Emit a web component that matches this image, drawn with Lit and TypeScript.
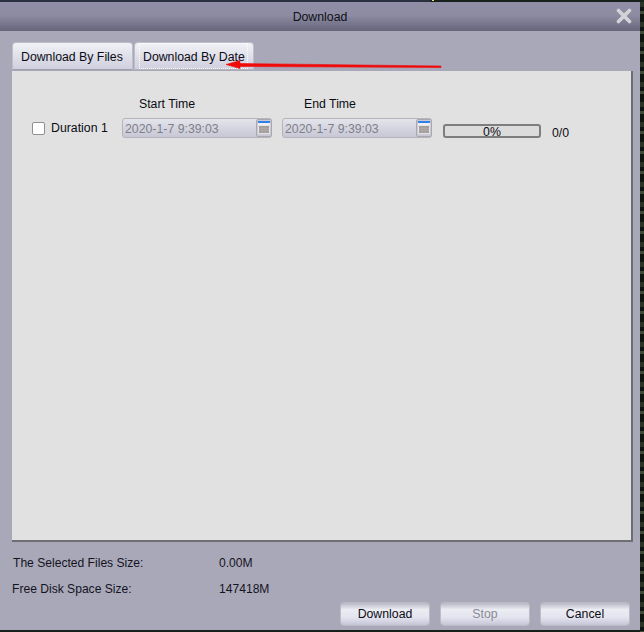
import { LitElement, html, css, svg } from "lit";
import { customElement } from "lit/decorators.js";

const calendar = svg`<svg class="cal-svg" width="16" height="18" viewBox="0 0 16 18">
  <rect x="0.5" y="0.5" width="15" height="17" rx="1.5" fill="#c9c8d3" stroke="#a8a8b0"/>
  <rect x="2" y="2" width="12" height="2" fill="#2f7fe8"/>
  <rect x="2" y="4" width="12" height="2" fill="#f0f0f4"/>
  <rect x="2" y="6" width="12" height="9" fill="#e4e4e8"/>
  <rect x="3" y="7" width="10" height="7" fill="#a49c9c"/>
  <path d="M3 9.5h10M3 11.5h10M6 7v7M9 7v7" stroke="#b0a9a9" stroke-width="1"/>
</svg>`;

@customElement("app-root")
export class AppRoot extends LitElement {
  static styles = css`
    :host {
      display: block;
      width: 644px;
      height: 632px;
      background: #18201c;
      font-family: "Liberation Sans", Arial, sans-serif;
      font-size: 12.3px;
      color: #0c0c14;
      position: relative;
      overflow: hidden;
    }
    .dialog {
      width: 640px;
      height: 628px;
      margin-top: 2px;
      background: #a9a8b9;
      display: flex;
      flex-direction: column;
      box-sizing: border-box;
    }
    .title {
      height: 29px;
      flex: none;
      display: flex;
      align-items: center;
      justify-content: center;
      background: linear-gradient(#8f8ea6 0%, #8d8ca3 45%, #66657b 100%);
      position: relative;
      color: #101018;
    }
    .close {
      position: absolute;
      right: 8px;
      top: 6px;
      width: 16px;
      height: 16px;
    }
    .tabs {
      display: flex;
      margin: 11px 0 0 12px;
      height: 29px;
      gap: 1px;
      flex: none;
    }
    .tab {
      height: 28px;
      box-sizing: border-box;
      border: 1px solid #bebec8;
      border-bottom: 1px solid #a0a0ac;
      border-radius: 4px 4px 0 0;
      background: linear-gradient(#f1f1f6, #cfcfdf);
      display: flex;
      align-items: center;
      padding: 2px 8px 0;
      width: 121px;
      position: relative;
      white-space: nowrap;
    }
    .tab.active {
      width: 120px;
      border-bottom-color: #b4b4bf;
    }
    .tab.active::after {
      content: "";
      position: absolute;
      left: 4px;
      right: 5px;
      top: 0;
      bottom: 0;
      border: 1px dotted #ffffff;
    }
    .panel {
      width: 621px;
      height: 471px;
      margin-left: 12px;
      box-sizing: border-box;
      background: #e1e1e1;
      border-right: 2px solid #6e6e72;
      border-bottom: 2px solid #6e6e72;
      padding: 27px 0 0 20px;
      flex: none;
    }
    .labels {
      display: flex;
      height: 13px;
      line-height: 13px;
      padding-left: 107px;
      gap: 109px;
    }
    .labels span {
      width: 56px;
      white-space: nowrap;
    }
    .row {
      display: flex;
      margin-top: 7px;
      height: 20px;
    }
    .check {
      width: 13px;
      height: 13px;
      box-sizing: border-box;
      margin-top: 4px;
      border: 1px solid #8f8f8f;
      border-radius: 2px;
      background: #fff;
      flex: none;
    }
    .dur {
      margin-left: 6px;
      width: 71px;
      line-height: 21px;
      flex: none;
      white-space: nowrap;
    }
    .input {
      width: 150px;
      height: 20px;
      box-sizing: border-box;
      border: 1px solid #b4b4bc;
      border-radius: 3px;
      background: linear-gradient(#e4e4ec, #c7c7d6);
      color: #7f7f88;
      display: flex;
      align-items: center;
      justify-content: space-between;
      padding: 1px 0 0 2px;
      flex: none;
      white-space: nowrap;
    }
    .input + .input { margin-left: 10px; }
    .cal-svg { display: block; margin: -1px -1px 0 0; }
    .progress {
      width: 98px;
      height: 14px;
      margin: 6px 0 0 11px;
      box-sizing: border-box;
      border: 2px solid #7e7e7e;
      border-radius: 3px;
      background: #dcdcdc;
      text-align: center;
      line-height: 12px;
      flex: none;
    }
    .count {
      margin: 9px 0 0 11px;
      line-height: 13px;
    }
    .info {
      display: grid;
      grid-template-columns: 207px auto;
      margin: 15px 0 0 12px;
      height: 39px;
      row-gap: 13px;
      grid-auto-rows: 13px;
      line-height: 13px;
      font-size: 12.1px;
      color: #14141e;
      flex: none;
    }
    .info .first { padding-left: 1px; }
    .actions {
      display: flex;
      justify-content: flex-end;
      gap: 10px;
      margin: 6px 10px 0 0;
    }
    button {
      all: unset;
      width: 90px;
      height: 24px;
      box-sizing: border-box;
      text-align: center;
      line-height: 25px;
      border: 1px solid #bcbcc6;
      border-radius: 4px;
      background: linear-gradient(#b7b7c6 0%, #ececf3 30%, #e4e4f0 65%, #c5c5d6 100%);
      color: #0c0c14;
      font: inherit;
    }
    button[disabled] { color: #8a8a94; }
    .arrow {
      position: absolute;
      left: 225px;
      top: 58px;
      pointer-events: none;
    }
    .speck {
      position: absolute;
      top: 0;
      height: 2px;
    }
    .s1 { left: 0; width: 430px; background: #2a3040; }
    .s2 { left: 432px; width: 2px; background: #e8e070; height: 1px; }
    .s3 { right: 0; top: 2px; width: 4px; height: 630px;
      background: repeating-linear-gradient(#2a3326 0 5px, #0e1210 5px 9px, #3f4a38 9px 12px, #11150f 12px 20px); }
  `;

  render() {
    return html`
      <div class="speck s1"></div>
      <div class="speck s2"></div>
      <div class="speck s3"></div>
      <div class="dialog">
        <div class="title">
          <span>Download</span>
          <svg class="close" viewBox="0 0 16 16">
            <path d="M2.5 2.5 13.5 13.5M13.5 2.5 2.5 13.5" stroke="#d4d4d8" stroke-width="3.6" stroke-linecap="round"/>
          </svg>
        </div>
        <div class="tabs">
          <div class="tab">Download By Files</div>
          <div class="tab active">Download By Date</div>
        </div>
        <div class="panel">
          <div class="labels"><span>Start Time</span><span>End Time</span></div>
          <div class="row">
            <div class="check"></div>
            <div class="dur">Duration 1</div>
            <div class="input"><span>2020-1-7 9:39:03</span>${calendar}</div>
            <div class="input"><span>2020-1-7 9:39:03</span>${calendar}</div>
            <div class="progress">0%</div>
            <div class="count">0/0</div>
          </div>
        </div>
        <div class="info">
          <span class="first">The Selected Files Size:</span><span>0.00M</span>
          <span>Free Disk Space Size:</span><span>147418M</span>
        </div>
        <div class="actions">
          <button>Download</button>
          <button disabled>Stop</button>
          <button>Cancel</button>
        </div>
      </div>
      <svg class="arrow" width="220" height="14" viewBox="0 0 220 14">
        <path d="M1 6.5 15 2.5 15 5.5 216 8 216 9.5 15 8.5 15 10.5Z" fill="#f00a0a" stroke="#f00a0a" stroke-width="0.6" stroke-linejoin="round"/>
      </svg>
    `;
  }
}
